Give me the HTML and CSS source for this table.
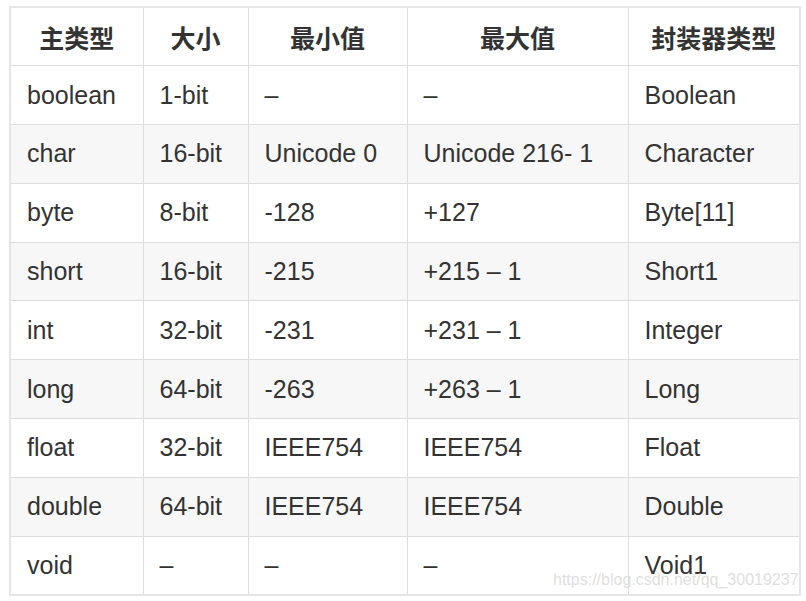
FILE: index.html
```html
<!DOCTYPE html>
<html>
<head>
<meta charset="utf-8">
<link rel="stylesheet" href="styles.css">
</head>
<body>
<div class="page">
<table class="types">
<colgroup>
<col class="c1"><col class="c2"><col class="c3"><col class="c4"><col class="c5">
</colgroup>
<thead>
<tr><th>主类型</th><th>大小</th><th>最小值</th><th>最大值</th><th>封装器类型</th></tr>
</thead>
<tbody>
<tr><td>boolean</td><td>1-bit</td><td>–</td><td>–</td><td>Boolean</td></tr>
<tr><td>char</td><td>16-bit</td><td>Unicode 0</td><td>Unicode 216- 1</td><td>Character</td></tr>
<tr><td>byte</td><td>8-bit</td><td>-128</td><td>+127</td><td>Byte[11]</td></tr>
<tr><td>short</td><td>16-bit</td><td>-215</td><td>+215 – 1</td><td>Short1</td></tr>
<tr><td>int</td><td>32-bit</td><td>-231</td><td>+231 – 1</td><td>Integer</td></tr>
<tr><td>long</td><td>64-bit</td><td>-263</td><td>+263 – 1</td><td>Long</td></tr>
<tr><td>float</td><td>32-bit</td><td>IEEE754</td><td>IEEE754</td><td>Float</td></tr>
<tr><td>double</td><td>64-bit</td><td>IEEE754</td><td>IEEE754</td><td>Double</td></tr>
<tr><td>void</td><td>–</td><td>–</td><td>–</td><td>Void1</td></tr>
</tbody>
</table>
<div class="watermark">https://blog.csdn.net/qq_30019237</div>
</div>
</body>
</html>
```
FILE: styles.css
```css
html, body {
  margin: 0;
  padding: 0;
  background: #ffffff;
}
.page {
  position: relative;
  width: 806px;
  height: 601px;
  padding: 6px 0 0 9px;
  box-sizing: border-box;
  overflow: hidden;
}
.types {
  border-collapse: collapse;
  table-layout: fixed;
  width: 790px;
  border: 2px solid #e6e6e6;
  font-family: "Liberation Sans", Arial, "Noto Sans CJK SC", sans-serif;
  font-size: 25px;
  color: #333333;
}
.c1 { width: 133px; }
.c2 { width: 105px; }
.c3 { width: 159px; }
.c4 { width: 221px; }
.c5 { width: 172px; }
.types th, .types td {
  border: 1px solid #dddddd;
  height: 58.8px;
  padding: 0 16px;
  box-sizing: border-box;
  vertical-align: middle;
  white-space: nowrap;
}
.types th {
  font-family: "Noto Sans CJK SC", "Liberation Sans", sans-serif;
  font-weight: bold;
  font-size: 25px;
  text-align: center;
  color: #333333;
}
.types td {
  text-align: left;
}
.types tbody tr:nth-child(even) td {
  background: #f7f7f7;
}
.watermark {
  position: absolute;
  left: 553px;
  top: 571px;
  font-family: "Liberation Sans", Arial, sans-serif;
  font-size: 16px;
  color: rgba(200, 200, 200, 0.6);
  text-shadow: 0 0 1px rgba(255,255,255,0.8);
  white-space: nowrap;
}
```
